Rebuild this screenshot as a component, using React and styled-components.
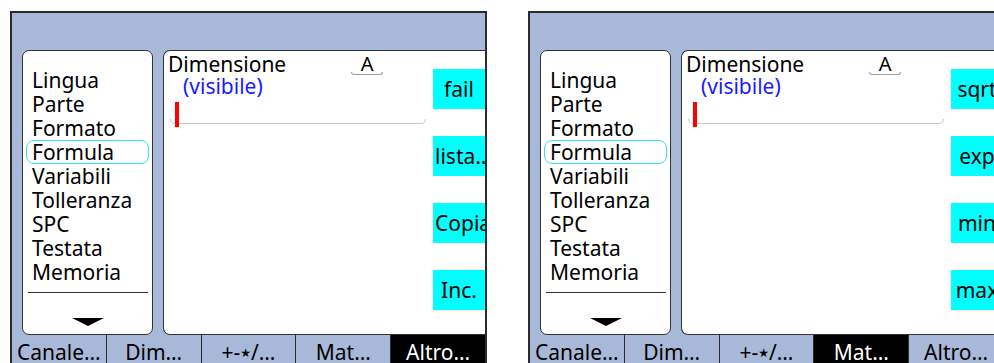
import React from 'react';
import styled, { createGlobalStyle } from 'styled-components';

const GlobalStyle = createGlobalStyle`
  html, body {
    margin: 0;
    padding: 0;
    background: #ffffff;
    overflow: hidden;
    font-family: "Noto Sans", "DejaVu Sans", sans-serif;
  }
`;

const Page = styled.div`
  display: flex;
  gap: 41px;
  padding: 11px 0 0 10px;
  width: 994px;
  height: 363px;
  box-sizing: border-box;
  overflow: hidden;
`;

const Screen = styled.div`
  flex-shrink: 0;
  width: 477px;
  height: 352px;
  box-sizing: border-box;
  border: 2px solid #2b2b2b;
  border-bottom: none;
  background: #a8b8d8;
  display: flex;
  flex-direction: column;
  overflow: hidden;

  & > * {
    flex-shrink: 0;
  }
`;

const Header = styled.div`
  height: 37px;
`;

const Body = styled.div`
  display: flex;
  gap: 10px;
  height: 285px;
  padding-left: 10px;
`;

const ListPanel = styled.div`
  width: 131px;
  box-sizing: border-box;
  background: #ffffff;
  border: 1.5px solid #333333;
  border-radius: 7px;
  padding-top: 17px;
  display: flex;
  flex-direction: column;
`;

const MenuItem = styled.div`
  margin: 0 3px;
  padding: 0 5px;
  height: 24px;
  box-sizing: border-box;
  font-size: 21px;
  line-height: 22px;
  color: #000000;
  border: 1px solid ${p => (p.selected ? '#33e6f0' : 'transparent')};
  border-radius: 8px;
`;

const Divider = styled.div`
  margin: 8px 4px 0 5px;
  border-top: 1.5px solid #333333;
`;

const ArrowDown = styled.div`
  align-self: center;
  margin-top: 25px;
  width: 0;
  height: 0;
  border-left: 16px solid transparent;
  border-right: 16px solid transparent;
  border-top: 8px solid #000000;
`;

const ContentPanel = styled.div`
  flex: 1;
  display: flex;
  gap: 7px;
  background: #ffffff;
  border: 1.5px solid #333333;
  border-right: none;
  border-radius: 7px 0 0 7px;
  overflow: hidden;
`;

const Editor = styled.div`
  flex: 1;
  padding: 2px 0 0 4px;
  font-size: 21px;
  line-height: 22px;
`;

const TitleRow = styled.div`
  display: flex;
  align-items: flex-start;
`;

const Title = styled.span`
  color: #000000;
`;

const Marker = styled.span`
  position: relative;
  margin-left: 65px;
  width: 32px;
  text-align: center;
  font-size: 20px;

  &::after {
    content: '';
    position: absolute;
    left: 0;
    right: 0;
    top: 19px;
    height: 2px;
    border: 1px solid #a0a0a0;
    border-top: none;
    border-radius: 0 0 6px 6px;
  }
`;

const Subtitle = styled.div`
  padding-left: 15px;
  color: #1a1aff;
`;

const InputLine = styled.div`
  position: relative;
  display: flex;
  align-items: flex-end;
  margin: 5px 0 0 2px;
  width: 256px;
  height: 22px;

  &::after {
    content: '';
    position: absolute;
    left: 0;
    right: 0;
    bottom: 0;
    height: 4px;
    border: 1.5px solid #c8c8c8;
    border-top: none;
    border-radius: 0 0 5px 5px;
  }
`;

const Cursor = styled.span`
  position: relative;
  z-index: 1;
  display: block;
  width: 4px;
  height: 25px;
  margin: 0 0 -3px 5px;
  background: #ff0000;
`;

const ButtonColumn = styled.div`
  width: 52px;
  display: flex;
  flex-direction: column;
  gap: 27px;
  padding-top: 18px;
`;

const SoftKey = styled.div`
  height: 40px;
  padding: 0 2px;
  background: #00ffff;
  color: #000000;
  font-size: 21px;
  line-height: 40px;
  text-align: center;
  white-space: nowrap;
  overflow: hidden;
`;

const TabBar = styled.div`
  display: flex;
  height: 40px;
`;

const Tab = styled.div`
  flex: 1;
  padding-top: 3px;
  font-size: 21px;
  line-height: 28px;
  text-align: center;
  white-space: nowrap;
  color: ${p => (p.active ? '#ffffff' : '#000000')};
  background: ${p => (p.active ? '#000000' : 'transparent')};
  border-left: 1.5px solid #2b2b2b;

  &:first-child {
    border-left: none;
  }
`;

const Star = styled.span`
  font-size: 12px;
  vertical-align: 3px;
`;

const menu = ['Lingua', 'Parte', 'Formato', 'Formula', 'Variabili', 'Tolleranza', 'SPC', 'Testata', 'Memoria'];

const tabs = [
  { id: 'canale', label: 'Canale…' },
  { id: 'dim', label: 'Dim…' },
  { id: 'ops', label: <>+-<Star>★</Star>/…</> },
  { id: 'mat', label: 'Mat…' },
  { id: 'altro', label: 'Altro…' },
];

const GaugeScreen = ({ keys, activeTab }) => (
  <Screen>
    <Header />
    <Body>
      <ListPanel>
        {menu.map(item => (
          <MenuItem key={item} selected={item === 'Formula'}>{item}</MenuItem>
        ))}
        <Divider />
        <ArrowDown />
      </ListPanel>
      <ContentPanel>
        <Editor>
          <TitleRow>
            <Title>Dimensione</Title>
            <Marker>A</Marker>
          </TitleRow>
          <Subtitle>(visibile)</Subtitle>
          <InputLine>
            <Cursor />
          </InputLine>
        </Editor>
        <ButtonColumn>
          {keys.map(k => (
            <SoftKey key={k}>{k}</SoftKey>
          ))}
        </ButtonColumn>
      </ContentPanel>
    </Body>
    <TabBar>
      {tabs.map(t => (
        <Tab key={t.id} active={t.id === activeTab}>{t.label}</Tab>
      ))}
    </TabBar>
  </Screen>
);

export default function App() {
  return (
    <>
      <GlobalStyle />
      <Page>
        <GaugeScreen keys={['fail', 'lista…', 'Copia', 'Inc.']} activeTab="altro" />
        <GaugeScreen keys={['sqrt', 'exp', 'min', 'max']} activeTab="mat" />
      </Page>
    </>
  );
}
